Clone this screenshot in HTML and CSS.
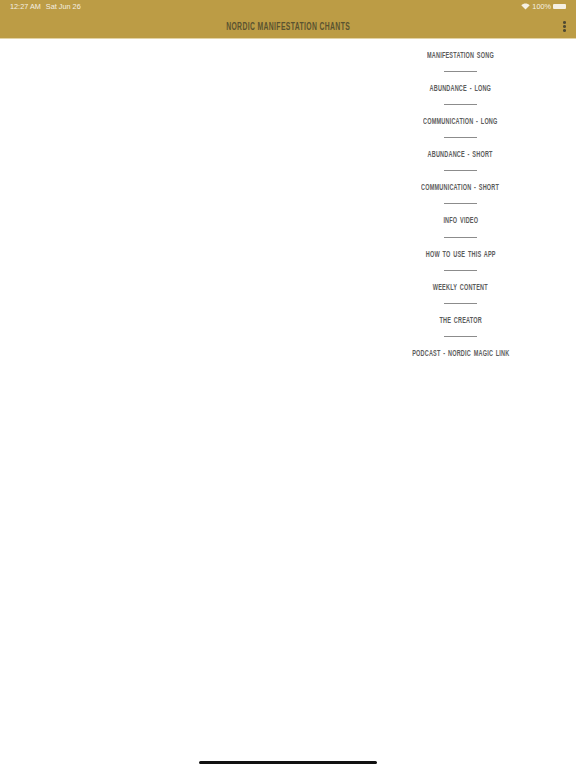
FILE: index.html
```html
<!DOCTYPE html>
<html lang="en">

<head>
    <meta charset="utf-8">
    <meta name="viewport" content="width=device-width, initial-scale=1.0">
    <title>Nordic Manifestation Chants</title>
    <link rel="stylesheet" href="styles.css">
</head>

<body>

    <header>
        <div class="statusbar">
            <span class="time">12:27 AM</span>
            <span class="date">Sat Jun 26</span>
            <span class="status-right">
                <svg class="wifi" viewBox="0 0 16 12" width="9" height="7">
                    <path d="M8 11.5 L0.5 3.8 C4.6 -0.3 11.4 -0.3 15.5 3.8 Z" fill="#fff"></path>
                </svg>
                <span class="battery-text">100%</span>
                <span class="battery"></span>
            </span>
        </div>
        <div class="titlebar">
            <h1>Nordic Manifestation Chants</h1>
            <button class="more" aria-label="More">
                <span></span><span></span><span></span>
            </button>
        </div>
    </header>

    <nav class="menu">
        <a href="#"><span>Manifestation Song</span></a>
        <a href="#"><span>Abundance - Long</span></a>
        <a href="#"><span>Communication - Long</span></a>
        <a href="#"><span>Abundance - Short</span></a>
        <a href="#"><span>Communication - Short</span></a>
        <a href="#"><span>Info Video</span></a>
        <a href="#"><span>How to use this app</span></a>
        <a href="#"><span>Weekly Content</span></a>
        <a href="#"><span>The Creator</span></a>
        <a href="#"><span>Podcast - Nordic Magic Link</span></a>
    </nav>

    <div class="home-indicator"></div>

</body>

</html>
```

FILE: styles.css
```css
* {
    box-sizing: border-box;
    padding: 0;
    margin: 0;
}

html,
body {
    height: 100%;
}

body {
    background: #fff;
    font-family: "Liberation Sans", sans-serif;
    display: flex;
    flex-direction: column;
    overflow: hidden;
}

header {
    background-color: #bc9c45;
    height: 39px;
    border-bottom: 1px solid #e3d3a6;
    flex: none;
}

.statusbar {
    height: 13px;
    padding: 0 10px;
    display: flex;
    align-items: center;
    color: #fff;
    font-size: 7.3px;
    opacity: 0.85;
}

.date {
    margin-left: 5px;
}

.status-right {
    margin-left: auto;
    display: flex;
    align-items: center;
    gap: 2px;
}

.battery {
    width: 13px;
    height: 5px;
    background: #fff;
    border-radius: 1px;
}

.titlebar {
    position: relative;
    height: 26px;
    display: flex;
    align-items: center;
    justify-content: center;
}

h1 {
    font-size: 10px;
    font-weight: bold;
    letter-spacing: 0.55px;
    text-transform: uppercase;
    color: #5a5330;
    transform: scaleX(0.68);
}

.more {
    position: absolute;
    right: 10px;
    top: 8px;
    display: flex;
    flex-direction: column;
    gap: 1.5px;
    background: none;
    border: 0;
}

.more span {
    width: 3px;
    height: 2.5px;
    border-radius: 50%;
    background: #4f4a32;
}

.menu {
    align-self: flex-end;
    width: 231px;
    display: flex;
    flex-direction: column;
    align-items: center;
}

.menu a {
    display: block;
    height: 33.1px;
    padding-top: 10px;
    line-height: 12px;
    font-size: 8.5px;
    font-weight: bold;
    letter-spacing: 0.3px;
    word-spacing: 1.5px;
    text-transform: uppercase;
    text-decoration: none;
    color: #5c5c5c;
    position: relative;
    white-space: nowrap;
}

.menu a span {
    display: inline-block;
    transform: scaleX(0.65);
}

.menu a:not(:last-child)::after {
    content: "";
    position: absolute;
    left: 50%;
    bottom: 0;
    width: 33px;
    margin-left: -16.5px;
    border-bottom: 1px solid #8c8c8c;
}

.home-indicator {
    position: fixed;
    left: 199px;
    bottom: 4px;
    width: 178px;
    height: 3px;
    border-radius: 2px;
    background: #111;
}
```
